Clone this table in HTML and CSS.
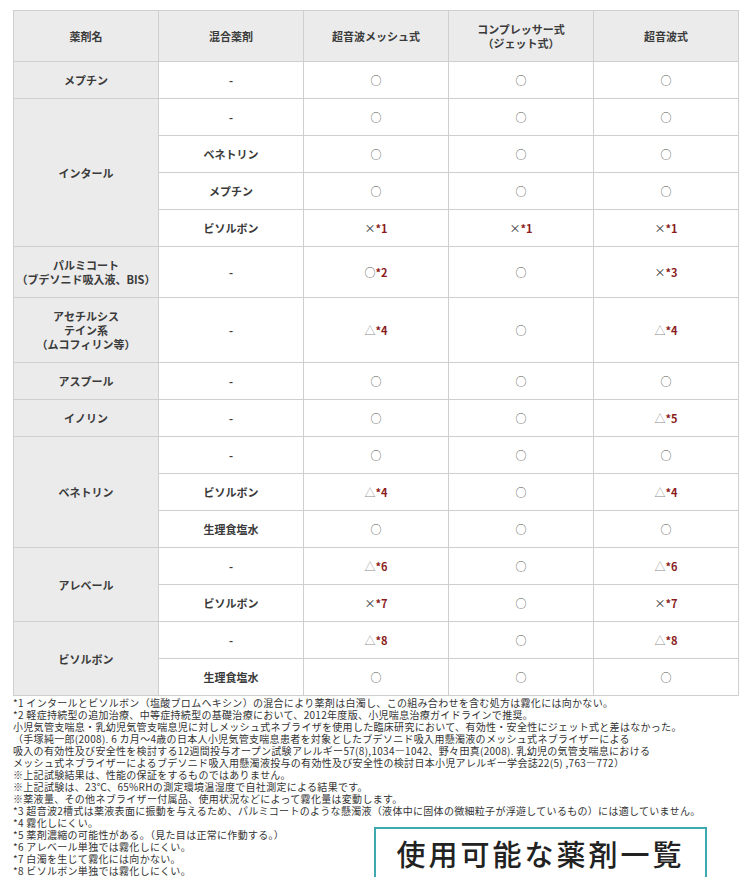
FILE: index.html
```html
<!DOCTYPE html>
<html lang="ja">
<head>
<meta charset="utf-8">
<title>使用可能な薬剤一覧</title>
<link rel="stylesheet" href="styles.css">
</head>
<body>
<main class="page">
<table class="drugs">
<colgroup><col><col><col><col><col></colgroup>
<thead>
<tr><th>薬剤名</th><th>混合薬剤</th><th>超音波メッシュ式</th><th>コンプレッサー式<br>（ジェット式）</th><th>超音波式</th></tr>
</thead>
<tbody>
<tr><th>メプチン</th><td class="mix">-</td><td><span class="ok">○</span></td><td><span class="ok">○</span></td><td><span class="ok">○</span></td></tr>
<tr><th rowspan="4">インタール</th><td class="mix">-</td><td><span class="ok">○</span></td><td><span class="ok">○</span></td><td><span class="ok">○</span></td></tr>
<tr><td class="mix">ベネトリン</td><td><span class="ok">○</span></td><td><span class="ok">○</span></td><td><span class="ok">○</span></td></tr>
<tr><td class="mix">メプチン</td><td><span class="ok">○</span></td><td><span class="ok">○</span></td><td><span class="ok">○</span></td></tr>
<tr><td class="mix">ビソルボン</td><td><span class="ng">×</span><span class="note">*1</span></td><td><span class="ng">×</span><span class="note">*1</span></td><td><span class="ng">×</span><span class="note">*1</span></td></tr>
<tr><th>パルミコート<br>（ブデソニド吸入液、BIS）</th><td class="mix">-</td><td><span class="ok">○</span><span class="note">*2</span></td><td><span class="ok">○</span></td><td><span class="ng">×</span><span class="note">*3</span></td></tr>
<tr><th>アセチルシス<br>テイン系<br>（ムコフィリン等）</th><td class="mix">-</td><td><span class="tri">△</span><span class="note">*4</span></td><td><span class="ok">○</span></td><td><span class="tri">△</span><span class="note">*4</span></td></tr>
<tr><th>アスプール</th><td class="mix">-</td><td><span class="ok">○</span></td><td><span class="ok">○</span></td><td><span class="ok">○</span></td></tr>
<tr><th>イノリン</th><td class="mix">-</td><td><span class="ok">○</span></td><td><span class="ok">○</span></td><td><span class="tri">△</span><span class="note">*5</span></td></tr>
<tr><th rowspan="3">ベネトリン</th><td class="mix">-</td><td><span class="ok">○</span></td><td><span class="ok">○</span></td><td><span class="ok">○</span></td></tr>
<tr><td class="mix">ビソルボン</td><td><span class="tri">△</span><span class="note">*4</span></td><td><span class="ok">○</span></td><td><span class="tri">△</span><span class="note">*4</span></td></tr>
<tr><td class="mix">生理食塩水</td><td><span class="ok">○</span></td><td><span class="ok">○</span></td><td><span class="ok">○</span></td></tr>
<tr><th rowspan="2">アレベール</th><td class="mix">-</td><td><span class="tri">△</span><span class="note">*6</span></td><td><span class="ok">○</span></td><td><span class="tri">△</span><span class="note">*6</span></td></tr>
<tr><td class="mix">ビソルボン</td><td><span class="ng">×</span><span class="note">*7</span></td><td><span class="ok">○</span></td><td><span class="ng">×</span><span class="note">*7</span></td></tr>
<tr><th rowspan="2">ビソルボン</th><td class="mix">-</td><td><span class="tri">△</span><span class="note">*8</span></td><td><span class="ok">○</span></td><td><span class="tri">△</span><span class="note">*8</span></td></tr>
<tr><td class="mix">生理食塩水</td><td><span class="ok">○</span></td><td><span class="ok">○</span></td><td><span class="ok">○</span></td></tr>
</tbody>
</table>

<section class="notes">
<p>*1 インタールとビソルボン（塩酸ブロムヘキシン）の混合により薬剤は白濁し、この組み合わせを含む処方は霧化には向かない。</p>
<p>*2 軽症持続型の追加治療、中等症持続型の基礎治療において、2012年度版、小児喘息治療ガイドラインで推奨。</p>
<p>小児気管支喘息・乳幼児気管支喘息児に対しメッシュ式ネブライザを使用した臨床研究において、有効性・安全性にジェット式と差はなかった。</p>
<p>（手塚純一郎(2008). 6 カ月～4歳の日本人小児気管支喘息患者を対象としたブデソニド吸入用懸濁液のメッシュ式ネブライザーによる</p>
<p>吸入の有効性及び安全性を検討する12週間投与オープン試験アレルギー57(8),1034―1042、野々田真(2008). 乳幼児の気管支喘息における</p>
<p>メッシュ式ネブライザーによるブデソニド吸入用懸濁液投与の有効性及び安全性の検討日本小児アレルギー学会誌22(5) ,763―772）</p>
<p>※上記試験結果は、性能の保証をするものではありません。</p>
<p>※上記試験は、23℃、65%RHの測定環境温湿度で自社測定による結果です。</p>
<p>※薬液量、その他ネブライザー付属品、使用状況などによって霧化量は変動します。</p>
<p>*3 超音波2槽式は薬液表面に振動を与えるため、パルミコートのような懸濁液（液体中に固体の微細粒子が浮遊しているもの）には適していません。</p>
<p>*4 霧化しにくい。</p>
<p>*5 薬剤濃縮の可能性がある。（見た目は正常に作動する。）</p>
<p>*6 アレベール単独では霧化しにくい。</p>
<p>*7 白濁を生じて霧化には向かない。</p>
<p>*8 ビソルボン単独では霧化しにくい。</p>
<h1 class="title">使用可能な薬剤一覧</h1>
</section>
</main>
</body>
</html>
```

FILE: styles.css
```css
html, body {
  margin: 0;
  padding: 0;
  background: #ffffff;
}

body {
  font-family: "Noto Sans CJK JP", "Noto Sans", "Liberation Sans", sans-serif;
  color: #333333;
}

.page {
  padding: 10px 11px 0 13px;
}

.drugs {
  width: 726px;
  table-layout: fixed;
  border-collapse: collapse;
  border: 1px solid #cfcfcf;
  font-size: 11px;
  line-height: 14px;
}

.drugs th,
.drugs td {
  border: 1px solid #cfcfcf;
  padding: 11px 2px;
  text-align: center;
  vertical-align: middle;
}

.drugs thead th {
  background: #ebebeb;
  font-weight: bold;
  color: #3a3a3a;
}

.drugs tbody th {
  background: #ebebeb;
  font-weight: bold;
  color: #3a3a3a;
}

.drugs td {
  background: #ffffff;
  color: #444444;
}

.drugs td.mix {
  font-weight: bold;
  color: #3a3a3a;
}

.ok {
  color: #555555;
}

.tri {
  color: #8a8a8a;
}

.ng {
  color: #2a2a2a;
}

.note {
  color: #8b1c1c;
  font-weight: bold;
}

.notes {
  position: relative;
  margin-top: 1px;
  font-size: 10px;
  line-height: 12px;
  letter-spacing: 0.3px;
  color: #333333;
}

.notes p {
  margin: 0;
  white-space: nowrap;
}

.title {
  position: absolute;
  left: 361px;
  top: 130px;
  width: 329px;
  height: 49px;
  margin: 0;
  border: 2px solid #3fa9b0;
  background: #ffffff;
  display: flex;
  align-items: center;
  justify-content: center;
  font-size: 29px;
  line-height: 1;
  font-weight: 500;
  letter-spacing: 3px;
  color: #222222;
}
```
